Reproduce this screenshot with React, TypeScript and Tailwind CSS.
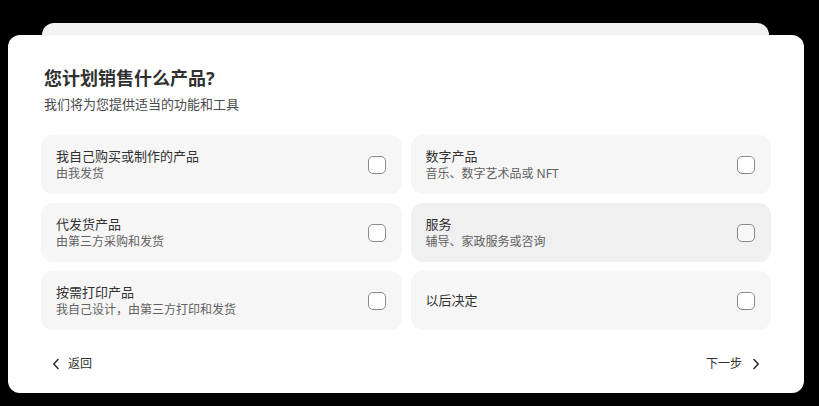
import React from 'react';

type Option = { title: string; sub?: string; hover?: boolean };

const options: Option[] = [
  { title: '我自己购买或制作的产品', sub: '由我发货' },
  { title: '数字产品', sub: '音乐、数字艺术品或 NFT' },
  { title: '代发货产品', sub: '由第三方采购和发货' },
  { title: '服务', sub: '辅导、家政服务或咨询', hover: true },
  { title: '按需打印产品', sub: '我自己设计，由第三方打印和发货' },
  { title: '以后决定' },
];

function Chevron({ dir }: { dir: 'left' | 'right' }) {
  return (
    <svg width="8" height="12" viewBox="0 0 8 12" fill="none">
      <path
        d={dir === 'left' ? 'M6 1.5 L1.8 6 L6 10.5' : 'M2 1.5 L6.2 6 L2 10.5'}
        stroke="#303030"
        strokeWidth="1.6"
        strokeLinecap="round"
        strokeLinejoin="round"
      />
    </svg>
  );
}

export default function App() {
  return (
    <div
      className="h-[406px] w-full bg-black pt-[23px]"
      style={{ fontFamily: '"Noto Sans", "Noto Sans CJK SC", sans-serif' }}
    >
      <div className="ml-[42px] h-[24px] w-[727px] rounded-t-[12px] bg-[#f3f3f3]" />
      <div className="relative -mt-[12px] ml-[8px] h-[358px] w-[796px] rounded-[12px] bg-white px-[33px] pt-[30px]">
        <h1 className="px-[3px] text-[18px] leading-[26px] font-bold text-[#303030]">您计划销售什么产品?</h1>
        <p className="mt-[3px] px-[3px] text-[13px] leading-[20px] text-[#4a4a4a]">我们将为您提供适当的功能和工具</p>

        <div className="mt-[21px] grid grid-cols-2 gap-[9px]">
          {options.map((o) => (
            <div
              key={o.title}
              className={
                'flex h-[59px] items-center justify-between rounded-[12px] pr-[16px] pl-[15px] ' +
                (o.hover ? 'bg-[#f0f0f0]' : 'bg-[#f6f6f6]')
              }
            >
              <div className="flex flex-col">
                <span className="text-[13px] leading-[17px] text-[#303030]">{o.title}</span>
                {o.sub && <span className="text-[12px] leading-[17px] text-[#616161]">{o.sub}</span>}
              </div>
              <div
                className={
                  'h-[18px] w-[18px] rounded-[5px] border border-[#8a8a8a] ' +
                  (o.hover ? 'bg-[#f8f8f8]' : 'bg-white')
                }
              />
            </div>
          ))}
        </div>

        <div className="mt-[24px] flex h-[20px] items-center justify-between pr-[11px] pl-[11px]">
          <div className="flex items-center gap-[8px]">
            <Chevron dir="left" />
            <span className="text-[12px] leading-[20px] text-[#303030]">返回</span>
          </div>
          <div className="flex items-center gap-[10px]">
            <span className="text-[12px] leading-[20px] text-[#303030]">下一步</span>
            <Chevron dir="right" />
          </div>
        </div>
      </div>
    </div>
  );
}
